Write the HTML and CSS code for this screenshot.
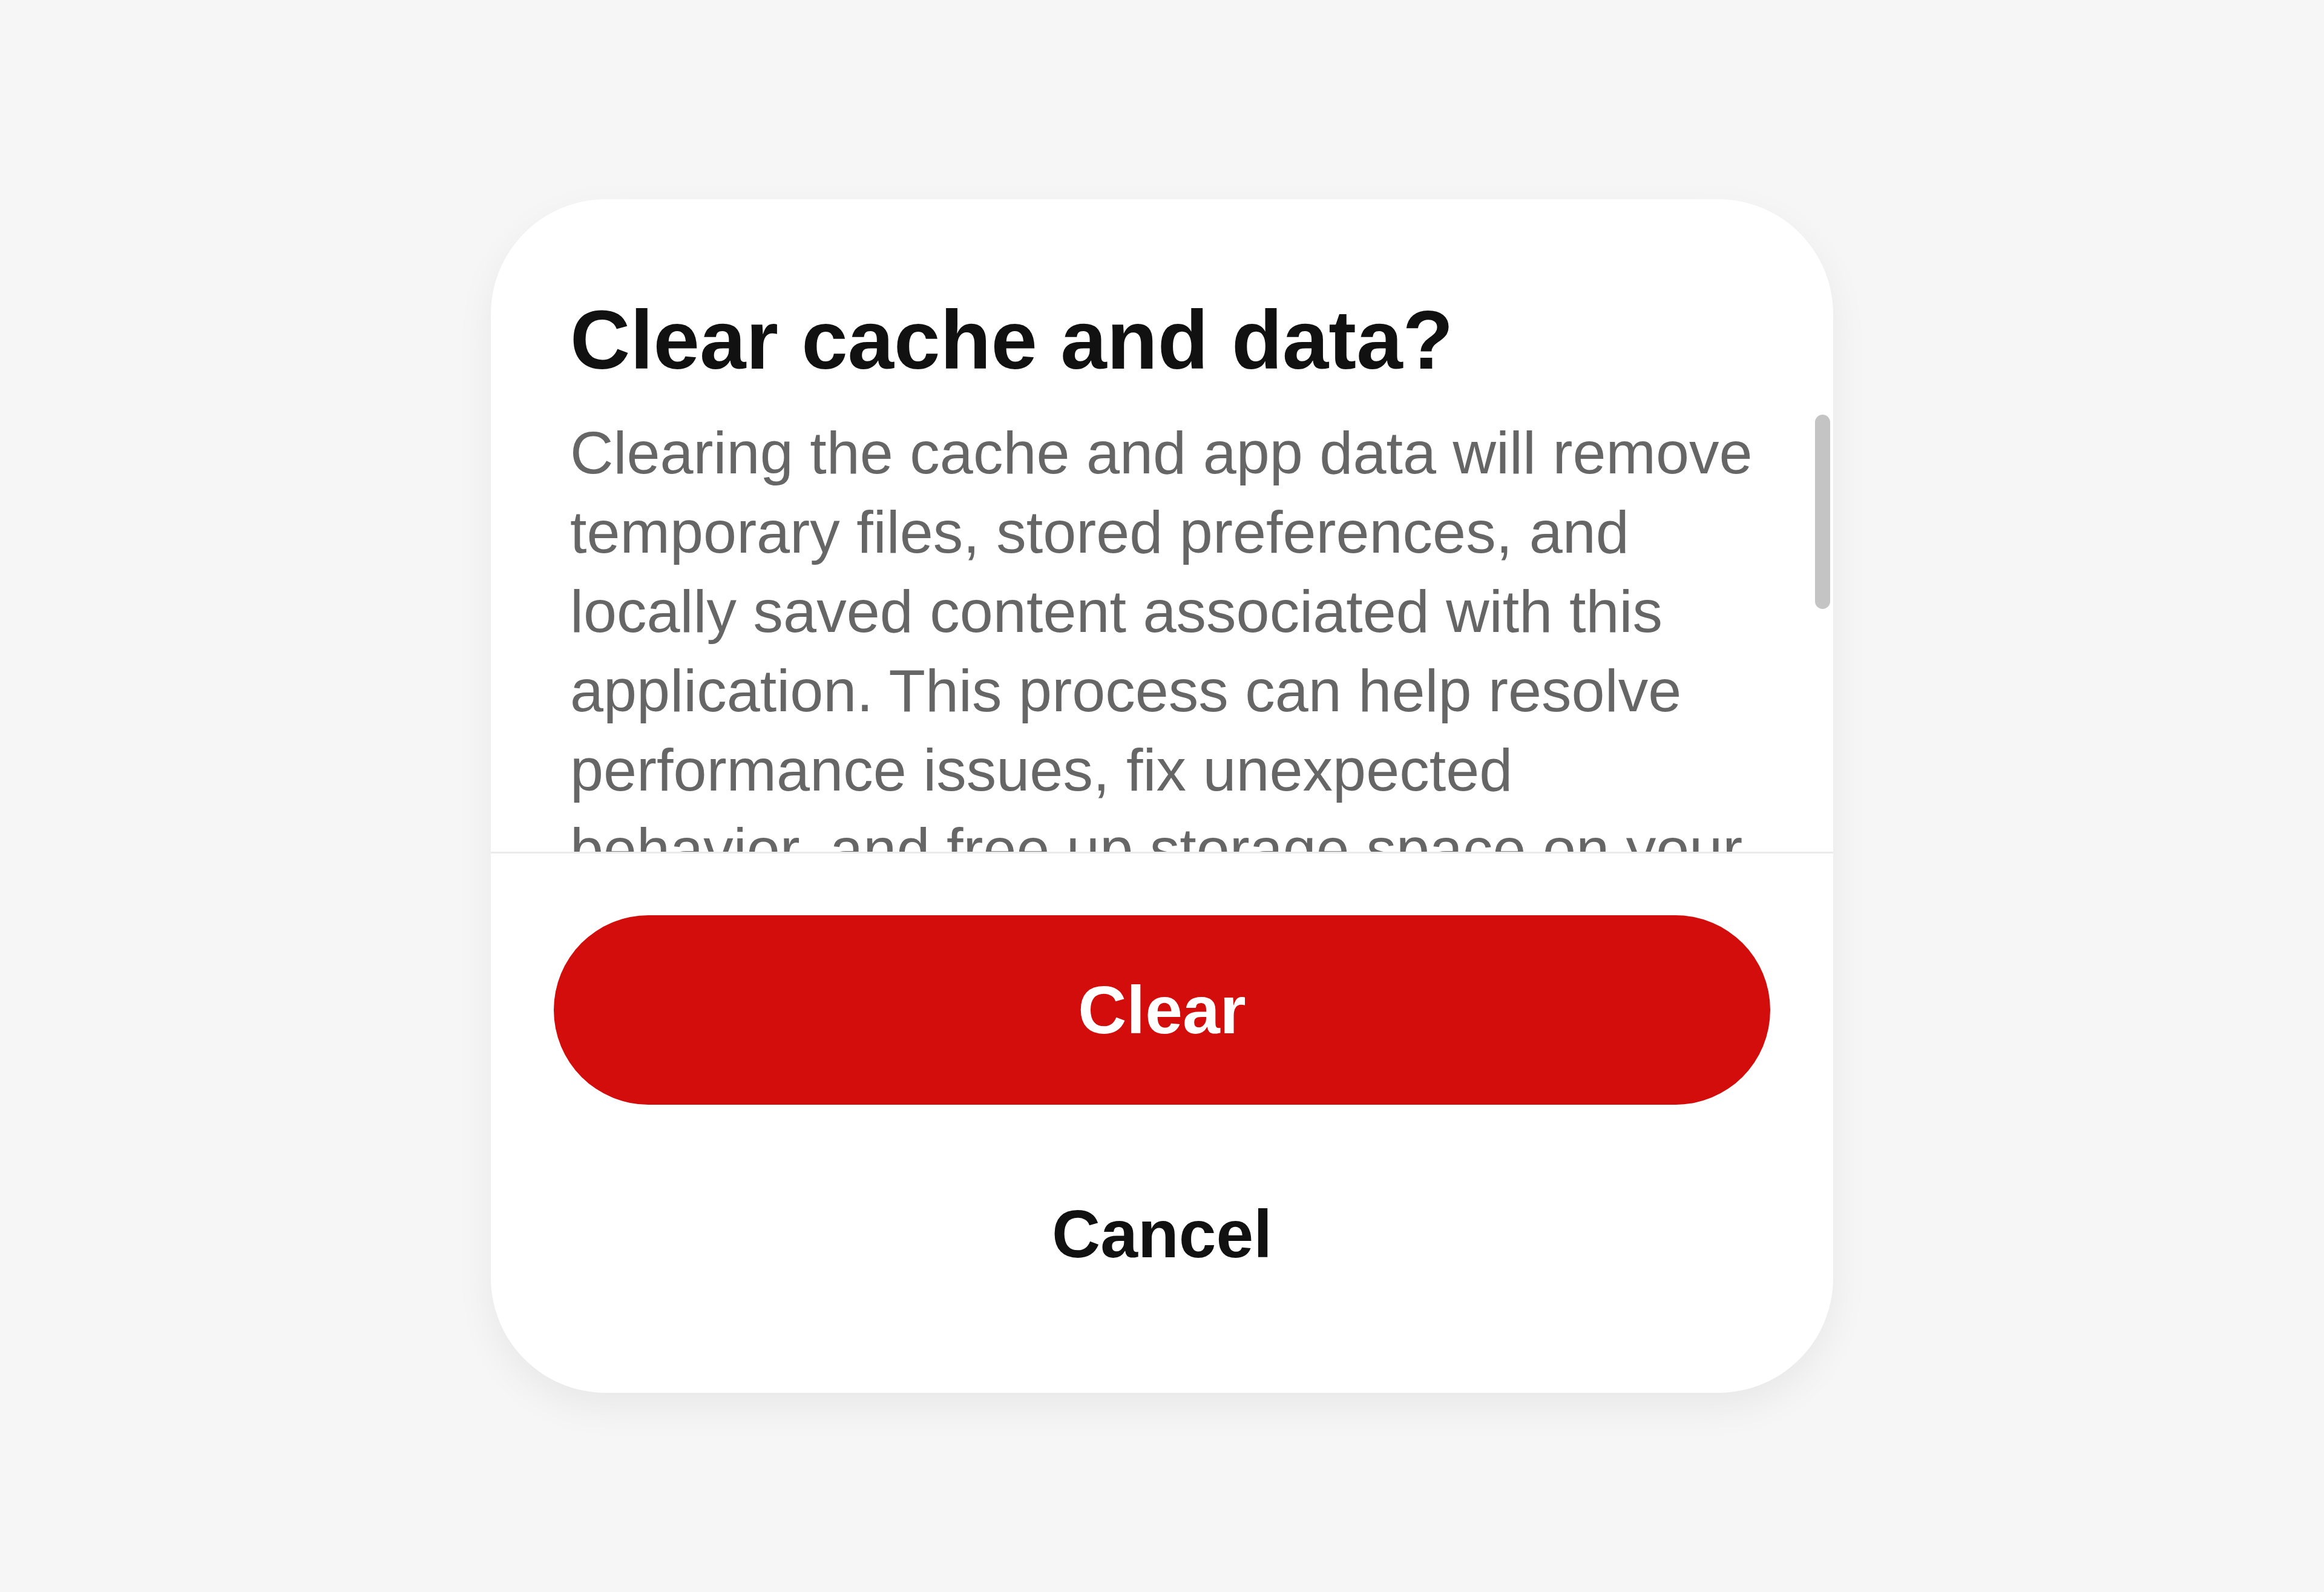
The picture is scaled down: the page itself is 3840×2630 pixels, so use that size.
FILE: index.html
```html
<html>
  <head>
    <title>Clear cache and data?</title>
    <link rel="stylesheet" href="styles.css">
  </head>
  <body>
    <div class="page">
      <!-- Caixa de diálogo -->
      <div class="dialog">
        <!-- Área rolável com título e texto -->
        <div class="dialog-body">
          <h1 class="dialog-title">Clear cache and data?</h1>
          <p class="dialog-text">Clearing the cache and app data will remove temporary files, stored preferences, and locally saved content associated with this application. This process can help resolve performance issues, fix unexpected behavior, and free up storage space on your device. You may need to sign in again and set up your preferences afterwards.</p>
          <div class="scroll-thumb"></div>
        </div>
        <!-- Botões de ação -->
        <div class="dialog-actions">
          <button class="btn btn-primary">Clear</button>
          <button class="btn btn-plain">Cancel</button>
        </div>
      </div>
    </div>
  </body>
</html>
```

FILE: styles.css
```css
/* Fundo da página e centralização da caixa */
body {
  margin: 0;
  background-color: #f6f6f6;
  font-family: "Liberation Sans", Arial, sans-serif;
}

.page {
  display: flex;
  align-items: center;
  justify-content: center;
  min-height: 100vh;
}

/* Caixa de diálogo */
.dialog {
  display: flex;
  flex-direction: column;
  width: 2218px;
  height: 1972px;
  background-color: #ffffff;
  border-radius: 190px;
  box-shadow: 0 24px 64px rgba(0, 0, 0, 0.06);
  overflow: hidden;
}

/* Área do texto, cortada embaixo */
.dialog-body {
  position: relative;
  height: 1078px;
  padding: 150px 117px 0 131px;
  overflow: hidden;
  box-sizing: border-box;
}

.dialog-title {
  margin: 0 0 38px;
  font-size: 137.5px;
  line-height: 1.2;
  font-weight: bold;
  color: #111111;
}

.dialog-text {
  margin: 0;
  font-size: 99px;
  line-height: 131px;
  color: #666666;
}

/* Barra de rolagem */
.scroll-thumb {
  position: absolute;
  top: 356px;
  right: 5px;
  width: 25px;
  height: 321px;
  border-radius: 13px;
  background-color: #c4c4c4;
}

/* Botões */
.dialog-actions {
  display: flex;
  flex-direction: column;
  gap: 57px;
  flex: 1;
  padding: 102px 104px 0;
  border-top: 3px solid #ebebeb;
}

.btn {
  height: 313px;
  border: none;
  border-radius: 157px;
  font-family: "Liberation Sans", Arial, sans-serif;
  font-size: 111px;
  font-weight: bold;
  cursor: pointer;
}

.btn-primary {
  background-color: #d30c0c;
  color: #ffffff;
}

.btn-plain {
  background-color: transparent;
  color: #111111;
}
```
